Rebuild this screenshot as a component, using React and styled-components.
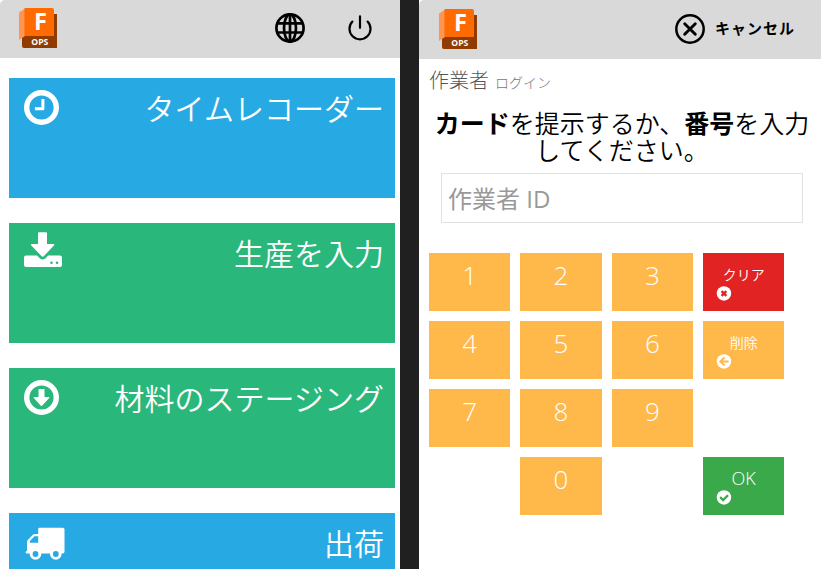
import React from "react";
import styled, { createGlobalStyle } from "styled-components";

const GlobalStyle = createGlobalStyle`
  * { box-sizing: border-box; }
  body { margin: 0; background: #202020; overflow: hidden; }
  button, input { font-family: inherit; margin: 0; }
`;

const Screen = styled.div`
  display: flex;
  gap: 19px;
  width: 821px;
  height: 569px;
  overflow: hidden;
  background: #202020;
  font-family: "Open Sans", "Noto Sans CJK JP", sans-serif;
  font-weight: 300;
`;

const Panel = styled.section`
  width: ${(p) => p.$width}px;
  height: 569px;
  flex: none;
  overflow: hidden;
  background: #fff;
`;

const Header = styled.header`
  display: flex;
  align-items: flex-start;
  height: ${(p) => p.$height}px;
  padding: ${(p) => p.$height - 50}px ${(p) => p.$right}px 0 ${(p) => p.$left}px;
  border-top-left-radius: 5px;
  background: #d9d9d9;
`;

const HeaderActions = styled.div`
  display: flex;
  align-items: center;
  gap: ${(p) => p.$gap}px;
  height: 40px;
  margin-left: auto;
`;

const IconButton = styled.button`
  display: flex;
  align-items: center;
  gap: 10px;
  padding: 0;
  border: 0;
  background: none;
  color: #000;
  font-size: 15px;
  font-weight: 700;
  letter-spacing: 1px;
  line-height: 24px;
`;

const CancelLabel = styled.span`
  padding-bottom: 2px;
`;

const TileList = styled.nav`
  display: flex;
  flex-direction: column;
  gap: 25px;
  padding: 20px 5px 0 9px;
`;

const Tile = styled.a`
  display: flex;
  justify-content: space-between;
  align-items: flex-start;
  flex: none;
  height: 120px;
  padding: 8px 11px 0 12px;
  background: ${(p) => p.$color};
  color: #fff;
`;

const TileLabel = styled.span`
  padding-top: 1px;
  font-size: 30px;
  font-weight: 350;
  line-height: 44px;
  white-space: nowrap;
`;

const Title = styled.h1`
  display: flex;
  align-items: baseline;
  gap: 6px;
  height: 51px;
  margin: 0;
  padding: 7px 0 0 10px;
  color: #555;
  font-size: 20px;
  font-weight: 300;
  line-height: 30px;
`;

const SubTitle = styled.small`
  color: #777;
  font-size: 14px;
`;

const Prompt = styled.p`
  height: 54px;
  margin: 0;
  padding-left: 4px;
  color: #000;
  font-size: 25px;
  font-weight: 350;
  line-height: 27px;
  text-align: center;
  white-space: nowrap;

  b { font-weight: 700; }
`;

const IdInput = styled.input`
  display: block;
  width: 362px;
  height: 50px;
  margin: 9px 0 30px 22px;
  padding: 0 6px 0 6px;
  border: 1px solid #e2e2e2;
  border-radius: 0;
  outline: none;
  font-size: 24px;
  font-weight: 400;

  &::placeholder { color: #999; opacity: 1; }
`;

const Keypad = styled.div`
  display: grid;
  grid-template-columns: repeat(4, 81.333px);
  grid-auto-rows: 58px;
  gap: 10px;
  margin-left: 10px;
`;

const Key = styled.button`
  grid-column: ${(p) => p.$column};
  padding: 0 0 15px;
  border: 0;
  background: #ffb84a;
  color: #fff;
  font-size: 26px;
  font-weight: 300;
  line-height: 36px;
`;

const ActionKey = styled.button`
  grid-column: 4;
  display: flex;
  flex-direction: column;
  padding: 11px 0 0 13px;
  border: 0;
  background: ${(p) => p.$color};
  color: #fff;
  font-size: ${(p) => p.$size}px;
  font-weight: ${(p) => (p.$size > 14 ? 300 : 350)};
  line-height: 21px;
`;

const ActionLabel = styled.span`
  align-self: stretch;
  padding-right: 13px;
  text-align: center;
`;

function Logo() {
  return (
    <svg width="40" height="40" viewBox="0 0 40 40">
      <path d="M36 6h3v34H36z" fill="#903b00" />
      <path d="M5 27l-1 2v9q0 2 2 2h33V27z" fill="#903b00" />
      <path d="M1 4.5L7 .5v27.5L1 32z" fill="#ff9551" />
      <path d="M7 0h27q2 0 2 2v26H6.5V.5z" fill="#ff6b00" />
      <text x="16" y="22" fill="#fff" fontFamily="Open Sans" fontWeight="700" fontSize="22.5" textLength="13" lengthAdjust="spacingAndGlyphs">F</text>
      <text x="13.3" y="37" fill="#fff" fontFamily="Open Sans" fontWeight="700" fontSize="9" textLength="17" lengthAdjust="spacingAndGlyphs">OPS</text>
    </svg>
  );
}

function GlobeIcon() {
  return (
    <svg width="30" height="30" viewBox="0 0 30 30" fill="none" stroke="#000" strokeWidth="2.7">
      <circle cx="15" cy="15" r="13.6" />
      <ellipse cx="15" cy="15" rx="6" ry="13.6" />
      <path d="M15 1v28M2.5 10.3h25M2.5 19.5h25" />
    </svg>
  );
}

function PowerIcon() {
  return (
    <svg width="30" height="30" viewBox="0 0 30 30" fill="none" stroke="#000" strokeWidth="2.2" strokeLinecap="round">
      <path d="M15 3.3v11.5M7.4 8.6a10.5 10.5 0 1 0 15.2 0" />
    </svg>
  );
}

function CloseIcon() {
  return (
    <svg width="30" height="30" viewBox="0 0 30 30" fill="none" stroke="#000" strokeLinecap="round">
      <circle cx="15" cy="15" r="13.7" strokeWidth="2.5" />
      <path d="M9.7 9.7l10.6 10.6M20.3 9.7L9.7 20.3" strokeWidth="2.9" />
    </svg>
  );
}

const tileArt = {
  clock: (
    <g fill="none" stroke="#fff">
      <circle cx="20.5" cy="21.5" r="14.8" strokeWidth="5.4" />
      <path d="M21.9 13v9.8h-8" strokeWidth="3" strokeLinejoin="round" />
    </g>
  ),
  download: (
    <g transform="translate(0 -1)">
      <path fill="#fff" d="M17 3.2q0-1 1-1h7q1 0 1 1V14h6.3q1.7 0 .6 1.5L23 26q-1.3 1.3-2.6 0L10.3 15.5Q9.2 14 11 14h6z" />
      <path fill="#fff" fillRule="evenodd" d="M5 25.5h11l3 3q2.6 2.2 5.2 0l3-3H39q2 0 2 2v7.5q0 2-2 2H5q-2 0-2-2v-7.5q0-2 2-2zm25.5 5.9a1.3 1.3 0 1 0 0 2.6 1.3 1.3 0 0 0 0-2.6zm5.5 0a1.3 1.3 0 1 0 0 2.6 1.3 1.3 0 0 0 0-2.6z" />
    </g>
  ),
  stage: (
    <>
      <circle cx="20.5" cy="21.5" r="14.8" fill="none" stroke="#fff" strokeWidth="5.4" />
      <path fill="#fff" d="M17.5 13h6v8h4.2q1.2 0 .5 1l-6.8 7.5q-.9.9-1.8 0L12.8 22q-.7-1 .5-1h4.2z" />
    </>
  ),
  truck: (
    <>
      <path fill="#fff" fillRule="evenodd" d="M17.2 8q0-1.3 1.3-1.3H42q1.5 0 1.5 1.5v22.5q0 1.8-2 1.8H6q-1.5 0-1.5-1.2 0-.8 1.5-1.2v-9.2q0-1.2.8-2l5-5.2q.8-.8 2-.8h3.4zm0 7.3h-3.8l-4.4 4.8v1.6h8.2z" />
      <circle cx="14.5" cy="33" r="5.8" fill="#fff" />
      <circle cx="34.8" cy="33" r="5.8" fill="#fff" />
      <circle cx="14.5" cy="33" r="2.9" fill="#27aae4" />
      <circle cx="34.8" cy="33" r="2.9" fill="#27aae4" />
    </>
  ),
};

function TileIcon({ name }) {
  return <svg width="44" height="42" viewBox="0 0 44 42">{tileArt[name]}</svg>;
}

const keyArt = {
  clear: <path d="M4.7 4.7l4.6 4.6M9.3 4.7L4.7 9.3" strokeWidth="2.3" />,
  back: <path d="M7.4 3.2L3.6 7l3.8 3.8M4 7h7.4" strokeWidth="1.9" />,
  check: <path d="M3.3 6.7l2.9 2.9 4.7-4.8" strokeWidth="2.2" />,
};

function KeyIcon({ name, color }) {
  return (
    <svg width="16" height="16" viewBox="-.7 -1.2 15.5 15.5">
      <circle cx="7" cy="7" r="7" fill="#fff" />
      <g fill="none" stroke={color}>{keyArt[name]}</g>
    </svg>
  );
}

const tiles = [
  { icon: "clock", label: "タイムレコーダー", color: "#27aae4" },
  { icon: "download", label: "生産を入力", color: "#29b77b" },
  { icon: "stage", label: "材料のステージング", color: "#29b77b" },
  { icon: "truck", label: "出荷", color: "#27aae4" },
];

const keys = [
  { digit: 1 }, { digit: 2 }, { digit: 3 },
  { action: "clear", label: "クリア", color: "#e12323", size: 14 },
  { digit: 4 }, { digit: 5 }, { digit: 6 },
  { action: "back", label: "削除", color: "#ffb84a", size: 14 },
  { digit: 7 }, { digit: 8 }, { digit: 9 },
  { digit: 0, column: 2 },
  { action: "check", label: "OK", color: "#39a949", size: 18 },
];

export default function App() {
  return (
    <>
      <GlobalStyle />
      <Screen lang="ja">
        <Panel $width={400}>
          <Header $height={58} $left={18} $right={25}>
            <Logo />
            <HeaderActions $gap={40}>
              <IconButton aria-label="言語"><GlobeIcon /></IconButton>
              <IconButton aria-label="電源"><PowerIcon /></IconButton>
            </HeaderActions>
          </Header>
          <TileList>
            {tiles.map((tile) => (
              <Tile key={tile.icon} $color={tile.color}>
                <TileIcon name={tile.icon} />
                <TileLabel>{tile.label}</TileLabel>
              </Tile>
            ))}
          </TileList>
        </Panel>
        <Panel $width={402}>
          <Header $height={59} $left={19} $right={26}>
            <Logo />
            <HeaderActions>
              <IconButton><CloseIcon /><CancelLabel>キャンセル</CancelLabel></IconButton>
            </HeaderActions>
          </Header>
          <Title>作業者 <SubTitle>ログイン</SubTitle></Title>
          <Prompt><b>カード</b>を提示するか、<b>番号</b>を入力<br />してください。</Prompt>
          <IdInput placeholder="作業者 ID" />
          <Keypad>
            {keys.map((k) => k.action ? (
              <ActionKey key={k.action} $color={k.color} $size={k.size}>
                <ActionLabel>{k.label}</ActionLabel>
                <KeyIcon name={k.action} color={k.color} />
              </ActionKey>
            ) : (
              <Key key={k.digit} $column={k.column}>{k.digit}</Key>
            ))}
          </Keypad>
        </Panel>
      </Screen>
    </>
  );
}
